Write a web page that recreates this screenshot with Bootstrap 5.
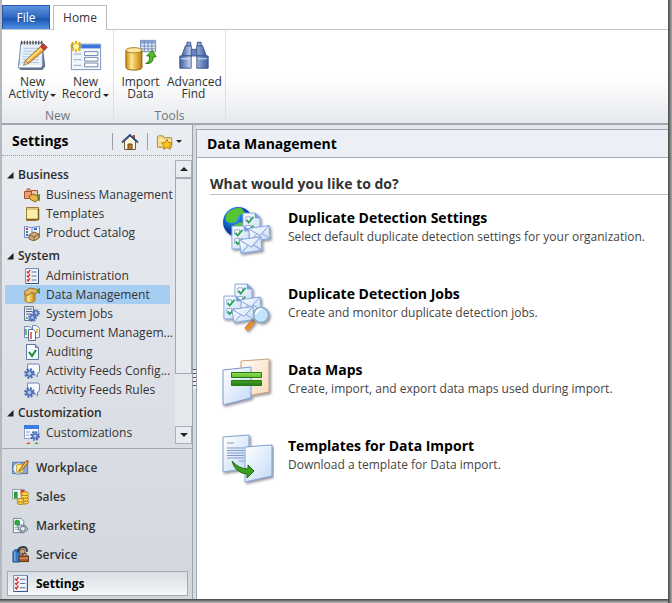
<!DOCTYPE html>
<html lang="en">
<head>
<meta charset="utf-8">
<meta name="viewport" content="width=device-width, initial-scale=1">
<title>Data Management</title>
<link href="https://cdn.jsdelivr.net/npm/bootstrap@5.3.0/dist/css/bootstrap.min.css" rel="stylesheet">
<style>
body{font-family:"Open Sans","Noto Sans",sans-serif;font-size:12px;line-height:19px;color:#333;background:#fff}
a{color:inherit;text-decoration:none}
button{color:inherit}
.frame{height:100vh;padding:0 4px 4px 0;background:linear-gradient(90deg,#444,#aaa) right/4px 100% no-repeat,linear-gradient(#444,#bbb) bottom/100% 4px no-repeat}
.app{height:100%;border-left:2px solid #b5b8bd;background:#e3e7ed}
.tabs{height:30px;padding-top:5px;background:#fff;border-bottom:1px solid #c3c6ca}
.tab{height:25px;border:1px solid #b9bdc4;border-bottom:0;background:#fff;margin-bottom:-1px;line-height:24px;width:54px;padding:0}
.tab-file{width:48px;color:#fff;border-color:#2458ad;background:linear-gradient(#5e94df,#2d67c0 50%,#1b55b0 55%,#4d92e8);margin:0 3px 0 0;height:24px}
.ribbon{height:95px;background:linear-gradient(#fff 50%,#e6e9ed);border-bottom:2px solid #a4a8ae}
.ribbon-group{border-right:1px solid #dcdfe3;padding:8px 0 0;width:112px}
.ribbon-group:first-child .tool{margin-left:4px;margin-right:-4px}
.tool{border:0;background:none;padding:0;width:53px;line-height:12px;text-align:center}
.tool svg{width:34px;height:34px;display:block;margin:0 auto 4px}
.caption{color:#70757c;line-height:16px;margin-top:8px}
.caret{display:inline-block;border:3px solid transparent;border-top-color:#222;border-bottom:0;margin-left:2px;vertical-align:1px}
.side{width:191px;background:linear-gradient(#eaedf2,#dfe3e9 45%,#d2d6dd);border-right:1px solid #9ba1ac}
.side-head{height:31px;padding:3px 10px 0;border-bottom:1px dotted #979da7;color:#000;margin-bottom:4px}
.side-title{font-size:14px;font-weight:700;margin:0}
.tool-sep{width:1px;height:17px;background:#9ba0aa}
.mini{border:0;padding:0;background:none;display:flex;align-items:center}
.tree-area{min-height:0;flex:1 1 0}
.tree{min-width:0;overflow:hidden;padding:5px 5px 0 3px}
.tree-group{margin:0 0 4px;padding:0;list-style:none}
.tree-head{font-size:12px;font-weight:600;line-height:20px;height:20px;margin:0;padding-left:2px;gap:4px;color:#2b2b2b}
.tree a{height:19px;padding-left:19px;gap:6px;white-space:nowrap}
.tree a svg,.mods svg{width:16px;height:16px;flex:none}
.tree a.chosen{background:#a6cdf2}
.scroller{width:17px;flex:none}
.scroller button{height:18px;width:17px;border:1px solid #a9afb9;background:#e9edf2;padding:0;display:flex;align-items:center;justify-content:center}
.thumb{flex:196 1 0;border:1px solid #a2a8b3;background:#e8ecf1}
.track{flex:52 1 0;background:#e4e7ec}
.mods{border-top:1px solid #a1a7b2;padding:6px 4px 3px 5px;margin-top:4px}
.mods a{height:25px;margin-bottom:4px;padding-left:4px;gap:7px;font-weight:600;border:1px solid transparent}
.mods a:last-child{margin-bottom:0;color:#000;font-weight:700;border-color:#a4aab4;background:linear-gradient(#d9dee3,#f3f7f8)}
.mods svg{width:17px;height:17px}
.splitter{width:3px;background:#d4d9e2;padding-top:244px}
.grip{width:3px;height:20px;background:repeating-linear-gradient(#555 0 1px,#eee 1px 4px)}
.main{background:#fff;border:1px solid #a2a8b2;border-width:1px 0 0 1px;margin-top:4px}
.main-head{height:28px;background:#ecf0f6;border-bottom:1px solid #a5abb8;padding:2px 0 0 10px;font-size:14px;font-weight:700;color:#000}
.ask{font-size:14px;font-weight:700;line-height:20px;margin:16px 0 11px 13px;border-bottom:1px solid #bfbfbf;color:#333}
.task{padding-left:25px;gap:14px;height:53px;margin-bottom:23px}
.task svg{width:52px;height:53px;flex:none}
.task h3{font-size:14px;line-height:20px;font-weight:700;margin:2px 0 0;color:#000}
.task p{margin:0;line-height:18px;color:#444}
</style>
<script src="https://cdn.jsdelivr.net/npm/bootstrap@5.3.0/dist/js/bootstrap.bundle.min.js"></script>
</head>
<body>
<svg width="0" height="0" class="position-absolute" aria-hidden="true">
<defs>
<linearGradient id="gold" x2="1"><stop stop-color="#c88a10"/><stop offset=".35" stop-color="#ffe68a"/><stop offset="1" stop-color="#c07a08"/></linearGradient>
<linearGradient id="steel" x2="1"><stop stop-color="#3c5da0"/><stop offset=".4" stop-color="#cfdcf5"/><stop offset="1" stop-color="#3b5b9c"/></linearGradient>
<linearGradient id="paper" x2="1" y2="1"><stop stop-color="#fff"/><stop offset="1" stop-color="#c3daf7"/></linearGradient>
<linearGradient id="peach" x2="1" y2="1"><stop stop-color="#fffaf2"/><stop offset="1" stop-color="#f6dabb"/></linearGradient>
<linearGradient id="green" x2="0" y2="1"><stop stop-color="#8ee04a"/><stop offset="1" stop-color="#1e7d12"/></linearGradient>
<radialGradient id="globe" cx=".35" cy=".3"><stop stop-color="#9fe0ff"/><stop offset=".5" stop-color="#1f7be0"/><stop offset="1" stop-color="#0b3da0"/></radialGradient>
<filter id="sh" x="-20%" y="-20%" width="150%" height="150%"><feDropShadow dx="1.5" dy="1.5" stdDeviation="1" flood-color="#223" flood-opacity=".5"/></filter>
<symbol id="checks" viewBox="0 0 16 16"><path d="M1.500.5h13v15h-13z" fill="#eef3fc" stroke="#7c8fb8"/><path d="M14.500 1v14.500H2" fill="none" stroke="#3b5688"/><path d="M7.500 4h5M7.500 8h5M7.500 12h5" stroke="#5d6f92"/><path d="M3 3.500l1.200 1.500L6 2M3 7.500l1.200 1.500L6 6M3 11.500l1.200 1.500L6 10" fill="none" stroke="#e22a2a" stroke-width="1.400"/></symbol>
<symbol id="gear" viewBox="0 0 10 10"><circle cx="5" cy="5" r="3.700" fill="none" stroke="#4466b2" stroke-width="2.200" stroke-dasharray="1.700 1.200"/><circle cx="5" cy="5" r="2.400" fill="#a9c0ec" stroke="#4a6bb8" stroke-width="1.300"/></symbol>
<symbol id="chat" viewBox="0 0 16 16"><path d="M3.500 1h10q2 0 2 2v5q0 2-2 2v4l-4-4h-6z" fill="#f5f8ff" stroke="#7487b0"/><use href="#gear" x="0" y="5" width="11" height="11"/></symbol>
<symbol id="sheet" viewBox="0 0 20 26"><path d="M1 1h13l5 5v19H1z" fill="url(#paper)" stroke="#86a4dc"/><path d="M14 1v5h5" fill="#7ba2dc" stroke="#7194cc"/><path d="M4 5h5v5H4zM4 14h5v5H4z" fill="#fff" stroke="#8fa6cf"/><path d="M5 8l2 3 5-6M5 17l2 3 5-6" fill="none" stroke="#25a455" stroke-width="1.800"/></symbol>
<symbol id="mail" viewBox="0 0 24 18"><path d="M1 4L22 1l1 13L3 17z" fill="url(#paper)" stroke="#86a4dc"/><path d="M1 4l12 7 9-10M3 17l7-8M23 14l-8-5" fill="none" stroke="#86a4dc"/></symbol>
</defs>
</svg>
<div class="frame">
<div class="app d-flex flex-column">
<div class="tabs d-flex" role="tablist">
<button class="tab tab-file" type="button" role="tab">File</button>
<button class="tab" type="button" role="tab" aria-selected="true">Home</button>
</div>
<div class="ribbon d-flex">
<section class="ribbon-group">
<div class="d-flex">
<button class="tool" type="button"><svg viewBox="0 0 36 36"><path d="M5 6h23l3 24-3 4H5l-3-3z" fill="#5f7590"/><path d="M5 5h23v24l-2 2H3z" fill="#e9f1fb" stroke="#8295b2"/><path d="M3 30h24" stroke="#fff" stroke-width="2"/><path d="M8 11h16M8 14h16M7 17h17M7 20h17M7 23h17M6 26h18" stroke="#a8c0e0"/><path d="M6 3v4M9 3v4M12 3v4M15 3v4M18 3v4M21 3v4M24 3v4M27 3v4" stroke="#555" stroke-width="1.500"/><path d="M10 24l3 3L30 13l-4-4z" fill="#f2ad35" stroke="#a56b13"/><path d="M11 25L27 11" stroke="#ffe29a" stroke-width="1.500"/><path d="M26 9l4 4 3-3-4-4z" fill="#cf3a33" stroke="#80302b"/><path d="M10 24l-2 5 5-2z" fill="#f6dfb5" stroke="#6b5130" stroke-width=".7"/></svg>New<br>Activity<span class="caret"></span></button>
<button class="tool" type="button"><svg viewBox="0 0 36 36"><path d="M2.500 6.500h31v27h-31z" fill="#f1f6fd" stroke="#7490bd"/><path d="M3 7h30v4H3z" fill="#3a76dc"/><path d="M5 17h8M5 23h8M5 29h8" stroke="#93a5c2"/><path d="M16.500 14.500h14v4h-14zM16.500 20.500h14v4h-14zM16.500 26.500h14v4h-14z" fill="#fff" stroke="#6e83a9"/><path d="M7.500 3v12M1.500 9h12M3 4.500l9 9M12 4.500l-9 9" stroke="#e6b400" stroke-width="2"/><circle cx="7.500" cy="9" r="3" fill="#fff8a8"/></svg>New<br>Record<span class="caret"></span></button>
</div>
<div class="caption text-center">New</div>
</section>
<section class="ribbon-group">
<div class="d-flex">
<button class="tool" type="button"><svg viewBox="0 0 36 36"><path d="M17.500 2.500h16v12h-16z" fill="#e5eefc" stroke="#7288b5"/><path d="M18 3h15v3H18z" fill="#8ba8dc"/><path d="M18 8.500h15M18 11.500h15M21.500 3v11M25.500 3v11M29.500 3v11" stroke="#7288b5"/><path d="M2 13v18q0 3 8.500 3t8.500-3V13z" fill="url(#gold)" stroke="#8f620e"/><ellipse cx="10.500" cy="13" rx="8.500" ry="2.800" fill="#ffe9a0" stroke="#a9781b"/><path d="M23 27q5-2 4-8h-3l6-6 4 7h-3q0 8-8 7z" fill="#55bd28" stroke="#26780f"/></svg>Import<br>Data</button>
<button class="tool" type="button"><svg viewBox="0 0 36 36"><path d="M9 8h6l1 11H5zM21 8h6l4 11H20z" fill="url(#steel)" stroke="#3c5792"/><path d="M15 12h6v7h-6z" fill="#6684c0" stroke="#3c5792"/><path d="M10.500 4.500h4v4h-4zM21.500 4.500h4v4h-4z" fill="#8da9dc" stroke="#3a5694"/><path d="M3 19h12v13H3zM21 19h12v13H21z" fill="url(#steel)" stroke="#3c5792"/><path d="M4 22h10M22 22h10" stroke="#dbe7fb"/></svg>Advanced<br>Find</button>
</div>
<div class="caption text-center">Tools</div>
</section>
</div>
<div class="d-flex flex-grow-1 overflow-hidden">
<aside class="side d-flex flex-column flex-shrink-0">
<div class="side-head d-flex align-items-center gap-2">
<h1 class="side-title me-auto">Settings</h1>
<span class="tool-sep"></span>
<button class="mini" type="button" aria-label="Home"><svg width="18" height="18" viewBox="0 0 18 18"><path d="M3.500 8v8.500h11V8L9 3z" fill="#fff4d8" stroke="#6d6250"/><path d="M12 2h2v4l-2-2z" fill="#b3452c"/><path d="M1 9.500L9 2l8 7.500" fill="none" stroke="#334d7d" stroke-width="1.800"/><path d="M7 11h4v5.500H7z" fill="#bd7b2c" stroke="#6f4617"/></svg></button>
<span class="tool-sep"></span>
<button class="mini" type="button" aria-label="Favorites"><svg width="18" height="18" viewBox="0 0 19 18"><path d="M1.500 3.500v11h15v-10h-8l-1-2h-5z" fill="#f6dc8b" stroke="#a98639"/><path d="M2 7h14" stroke="#fff2c0"/><path d="M11.500 6l1.700 3.600 4 .5-3 2.700.8 4-3.500-2-3.500 2 .8-4-3-2.700 4-.5z" fill="#ffc61e" stroke="#b87d05"/></svg><span class="caret"></span></button>
</div>
<div class="tree-area d-flex">
<nav class="tree flex-grow-1" aria-label="Settings areas">
<h2 class="tree-head d-flex align-items-center"><svg width="7" height="7" viewBox="0 0 7 7"><path d="M6.500 0v6.500H0z" fill="#222"/></svg>Business</h2>
<ul class="tree-group">
<li><a class="d-flex align-items-center" href="#"><svg viewBox="0 0 16 16"><path d="M.500 4.500h7v7h-7z" fill="#ef9d76" stroke="#a4522c"/><path d="M3 4V2h3v2M7.500 3.500h6v6h-6z" fill="#f4c7a8" stroke="#a4522c"/><path d="M16 7v7l-3-1V8z" fill="#3fa13a"/><path d="M5 9l4-2 5 2v4l-3 2-5-3z" fill="#e7b548" stroke="#8a641b"/></svg>Business Management</a></li>
<li><a class="d-flex align-items-center" href="#"><svg viewBox="0 0 16 16"><path d="M2.500 1.500h12v11l-2 2h-10z" fill="#fbedb0" stroke="#9d8034"/><path d="M2 13.500h13M14.500 3v11" stroke="#775c1e" stroke-width="1.500"/><path d="M3 3h11" stroke="#caa64c"/></svg>Templates</a></li>
<li><a class="d-flex align-items-center" href="#"><svg viewBox="0 0 16 16"><path d="M.500 1.500l7 1 8-1v11h-15z" fill="#eef4ff" stroke="#6b88c5"/><path d="M8 2v10" stroke="#6b88c5"/><path d="M2 4h2" stroke="#d33" stroke-width="2"/><path d="M2 7h2" stroke="#2a9a37" stroke-width="2"/><path d="M2 10h2M10 4h3" stroke="#3867ce" stroke-width="2"/><path d="M5 10l5-3 5 2v4l-5 3-5-2z" fill="#d5ae7b" stroke="#806039"/><path d="M5 10l5 2 5-3M10 12v4" fill="none" stroke="#806039"/></svg>Product Catalog</a></li>
</ul>
<h2 class="tree-head d-flex align-items-center"><svg width="7" height="7" viewBox="0 0 7 7"><path d="M6.500 0v6.500H0z" fill="#222"/></svg>System</h2>
<ul class="tree-group">
<li><a class="d-flex align-items-center" href="#"><svg><use href="#checks"/></svg>Administration</a></li>
<li><a class="chosen d-flex align-items-center" href="#" aria-current="page"><svg viewBox="0 0 16 16"><path d="M1 6v7q0 2.500 5 2.500T11 13V6z" fill="url(#gold)" stroke="#b98020"/><path d="M0 5l6-4 6 1 2 3-4 2-2-2-3 3H1z" fill="#dfb565" stroke="#9a722b"/><path d="M13 2l3-1v6l-2-1z" fill="#3fa13a"/></svg>Data Management</a></li>
<li><a class="d-flex align-items-center" href="#"><svg viewBox="0 0 16 16"><path d="M.500.5h9v14h-9z" fill="#e5ebf2" stroke="#65768c"/><path d="M2 3h6M2 5.500h6M2 8h4" stroke="#52647b"/><circle cx="3" cy="12" r="1" fill="#32a54a"/><use href="#gear" x="8" y="3" width="8" height="8"/><use href="#gear" x="4" y="7" width="9" height="9"/></svg>System Jobs</a></li>
<li><a class="d-flex align-items-center" href="#"><svg viewBox="0 0 16 16"><path d="M.500 1.500h5l2 2v9h-7z" fill="#f3f7ff" stroke="#7488ad"/><path d="M8.500.5h4l3 3v9h-7z" fill="#f3f7ff" stroke="#7488ad"/><path d="M4.500 4.500h5l2 2v9h-7z" fill="#fff" stroke="#526d9c"/><path d="M2 4v6" stroke="#4aa550" stroke-width="1.500"/><path d="M7 7v7" stroke="#d24837" stroke-width="1.500"/><path d="M13 4v4" stroke="#efb929" stroke-width="2"/></svg>Document Managem...</a></li>
<li><a class="d-flex align-items-center" href="#"><svg viewBox="0 0 16 16"><path d="M2.500.5h9l3 3v12h-12z" fill="#f4f8ff" stroke="#60779d"/><path d="M11.500.5v3h3" fill="#b3c4de" stroke="#60779d"/><path d="M5 8l3 4 4-6" fill="none" stroke="#178b2c" stroke-width="2"/></svg>Auditing</a></li>
<li><a class="d-flex align-items-center" href="#"><svg><use href="#chat"/></svg>Activity Feeds Config...</a></li>
<li><a class="d-flex align-items-center" href="#"><svg><use href="#chat"/></svg>Activity Feeds Rules</a></li>
</ul>
<h2 class="tree-head d-flex align-items-center"><svg width="7" height="7" viewBox="0 0 7 7"><path d="M6.500 0v6.500H0z" fill="#222"/></svg>Customization</h2>
<ul class="tree-group">
<li><a class="d-flex align-items-center" href="#"><svg viewBox="0 0 16 16"><path d="M.500.5h14v13H.500z" fill="#f5f8fe" stroke="#8ba0c8"/><path d="M0 0h15v4H0z" fill="#3f7be0"/><path d="M2 7h4M2 10h3M8 7h5" stroke="#8ba0c8"/><use href="#gear" x="6" y="6" width="10" height="10"/></svg>Customizations</a></li>
<li><a href="#" aria-label="Solutions" class="d-flex"><svg viewBox="0 0 16 16"><path d="M1 3l3.500-3L8 3v4H1z" fill="#e6552c"/><path d="M9 3l3.500-3L16 3v4H9z" fill="#46a83c"/></svg></a></li>
</ul>
</nav>
<div class="scroller d-flex flex-column">
<button type="button" aria-label="Scroll up"><svg width="8" height="4"><path d="M4 0l4 4H0z" fill="#222"/></svg></button>
<div class="thumb"></div><div class="track"></div>
<button type="button" aria-label="Scroll down"><svg width="8" height="4"><path d="M0 0h8L4 4z" fill="#222"/></svg></button>
</div>
</div>
<nav class="mods" aria-label="Modules">
<a class="d-flex align-items-center" href="#"><svg viewBox="0 0 18 18"><path d="M.500 3.500h16v12H.500z" fill="#8caad4" stroke="#56739d"/><circle cx="7" cy="10" r="6" fill="#e9f2fd" stroke="#6383b1"/><path d="M5 6h7v8H5z" fill="#fff0a0" stroke="#c59825"/><path d="M8 11l7-9 2 2-7 8-3 1z" fill="#f3ba32" stroke="#8b5d16"/><path d="M15 2l2 2 1-2-2-1z" fill="#d44"/></svg>Workplace</a>
<a class="d-flex align-items-center" href="#"><svg viewBox="0 0 18 18"><path d="M.500 1.500h13v10H.500z" fill="#f1f5fb" stroke="#8d9bb4"/><path d="M2 4h4v7H2z" fill="#24a42e"/><path d="M9 2h4v6H9z" fill="#e0362b"/><g fill="#ffd957" stroke="#aa760b"><ellipse cx="13.500" cy="15" rx="4" ry="2"/><ellipse cx="13.500" cy="12" rx="4" ry="2"/><ellipse cx="13.500" cy="9" rx="4" ry="2"/><ellipse cx="13.500" cy="6" rx="4" ry="2"/><ellipse cx="9" cy="15.500" rx="3.500" ry="2"/><ellipse cx="9" cy="13" rx="3.500" ry="2"/></g></svg>Sales</a>
<a class="d-flex align-items-center" href="#"><svg viewBox="0 0 18 18"><path d="M1.500 1.500h8l3 3v12h-11z" fill="#f3f8fd" stroke="#70809a"/><circle cx="5.500" cy="6" r="3" fill="#2ba640"/><path d="M3 11h4M3 13h4" stroke="#8aa"/><path d="M6 8l8 1 3 4-5 4-5-3z" fill="#c4ceda" stroke="#5e6f84"/><circle cx="11.500" cy="12.500" r="2.500" fill="#eff4f9" stroke="#5e6f84"/></svg>Marketing</a>
<a class="d-flex align-items-center" href="#"><svg viewBox="0 0 18 18"><path d="M1 6l2-2h5v13H1z" fill="#3977c9" stroke="#204d91"/><path d="M3 6v10" stroke="#9bc6f5"/><path d="M6 7q0-6 6-6 4 0 4 5" fill="none" stroke="#333b46" stroke-width="2"/><circle cx="11" cy="6" r="3" fill="#c9a47e" stroke="#584432"/><path d="M7.500 10.500h10v6h-10z" fill="#a95b2b" stroke="#5e2d11"/><path d="M8 13h9" stroke="#e6ae78"/><path d="M11 10V8h4v2" fill="none" stroke="#5e2d11"/></svg>Service</a>
<a class="d-flex align-items-center" href="#" aria-current="true"><svg><use href="#checks"/></svg>Settings</a>
</nav>
</aside>
<div class="splitter flex-shrink-0"><div class="grip"></div></div>
<main class="main flex-grow-1">
<h2 class="main-head d-flex align-items-center m-0">Data Management</h2>
<h2 class="ask">What would you like to do?</h2>
<a class="task d-flex" href="#"><svg viewBox="0 0 52 53"><g filter="url(#sh)"><circle cx="16" cy="16" r="15" fill="url(#globe)"/><path d="M4 9Q10 1 19 2l4 5-7 3-2 6-6 1-4-2zM12 19l7-3 5 4-3 9-6-3z" fill="#55c431"/><use href="#sheet" x="20" y="6" width="19" height="25"/><use href="#mail" x="25" y="18" width="24" height="19"/><use href="#sheet" x="9" y="19" width="19" height="25"/><use href="#mail" x="16" y="29" width="25" height="20"/></g></svg><div><h3>Duplicate Detection Settings</h3><p>Select default duplicate detection settings for your organization.</p></div></a>
<a class="task d-flex" href="#"><svg viewBox="0 0 52 53"><g filter="url(#sh)"><use href="#sheet" x="12" y="1" width="19" height="25"/><use href="#mail" x="16" y="14" width="24" height="18"/><use href="#sheet" x="1" y="13" width="19" height="25"/><use href="#mail" x="9" y="23" width="24" height="19"/><path d="M32 38l-8 9" stroke="#8a7a70" stroke-width="4"/><path d="M31 40l-7 8" stroke="#f08a24" stroke-width="4"/><circle cx="39" cy="33" r="7.500" fill="#c2e4fc" stroke="#8da8c4" stroke-width="1.500"/><path d="M34 32q1-5 6-5" fill="none" stroke="#fff" stroke-width="2"/></g></svg><div><h3>Duplicate Detection Jobs</h3><p>Create and monitor duplicate detection jobs.</p></div></a>
<a class="task d-flex" href="#"><svg viewBox="0 0 52 53"><g filter="url(#sh)"><path d="M19 3l28-2v33l-28 5z" fill="url(#peach)" stroke="#c9a27a"/><path d="M1 12l28-3v31L1 47z" fill="url(#paper)" stroke="#7c9bce"/></g><path d="M9.500 14.500h30v5h-30zM9.500 22.500h30v5h-30z" fill="url(#green)" stroke="#287a17"/></svg><div><h3>Data Maps</h3><p>Create, import, and export data maps used during import.</p></div></a>
<a class="task d-flex" href="#"><svg viewBox="0 0 52 53"><g filter="url(#sh)"><path d="M1 3l26-2v33L1 38z" fill="url(#paper)" stroke="#86a2ce"/><path d="M23 13l27-2v31l-27 6z" fill="url(#paper)" stroke="#7f9fd2"/></g><path d="M5 9h7M5 14h17M5 16.500h17M5 19h17M5 21.500h17M5 24h17M17 27h5" stroke="#8098c6"/><path d="M10 27q7 8 16 8v-4l6 6-7 7v-4q-12-1-15-13z" fill="#3b9f20" stroke="#1f6d10"/></svg><div><h3>Templates for Data Import</h3><p>Download a template for Data import.</p></div></a>
</main>
</div>
</div>
</div>
</body>
</html>
